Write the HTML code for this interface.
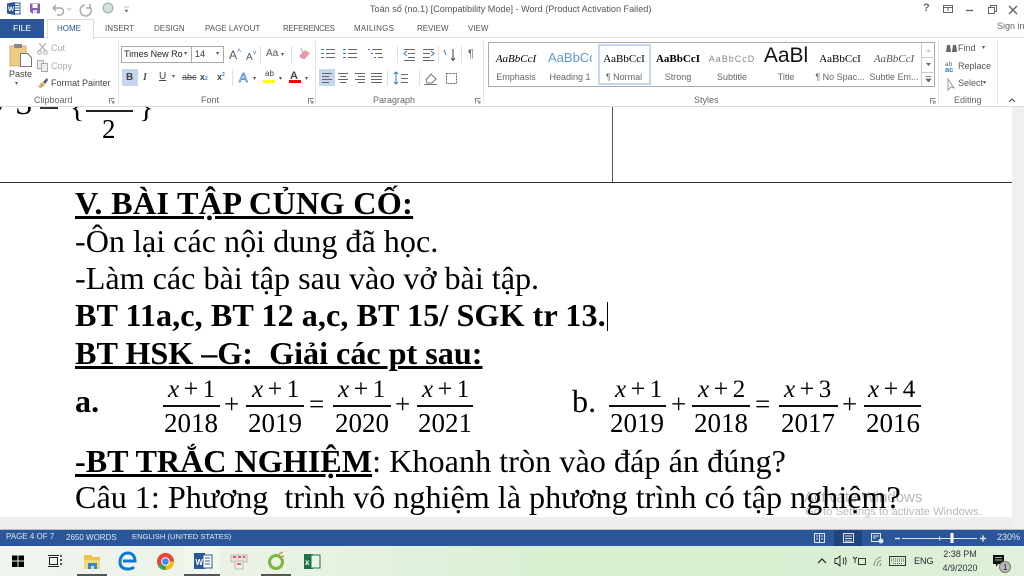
<!DOCTYPE html>
<html><head><meta charset="utf-8"><style>
*{box-sizing:border-box}
html,body{margin:0;padding:0;width:1024px;height:576px;overflow:hidden;background:#fff;position:relative}
.u,.d{position:absolute;white-space:nowrap;line-height:1}
.u{font-family:"Liberation Sans",sans-serif;color:#555;font-size:9px}
.d{font-family:"Liberation Serif",serif;color:#000;font-size:32.15px}
.b{font-weight:bold}
.r{position:absolute}
.c{text-align:center}
svg{position:absolute;overflow:visible}
.tab{font-size:8px;top:24.5px}
.n{font-size:27px;text-align:center;width:60px}
.m{font-size:25px;white-space:pre;word-spacing:0}
.m i{font-style:italic;margin-right:4.500px}
.m b{font-weight:normal;margin-right:4.500px;font-size:26px}
.l{position:absolute;height:1.500px;background:#111;top:405px}
.o{font-size:27px}
.s{position:absolute;width:54px;height:14px;overflow:hidden;text-align:center;white-space:nowrap;font-size:11px;line-height:14px;font-family:"Liberation Serif",serif;color:#000}
.t{position:absolute;width:54px;text-align:center;font:9px/1 "Liberation Sans",sans-serif;color:#666;white-space:nowrap}
</style></head><body>
<!-- document -->
<div class="r" style="left:0;top:107px;width:1012px;height:423px;background:#fff"></div>
<div class="r" style="left:1012px;top:107px;width:12px;height:423px;background:#f0f0f0"></div>
<div class="r" style="left:0;top:517px;width:1012px;height:13px;background:#eeeeee"></div>
<div class="r" style="left:0;top:182px;width:1012px;height:1px;background:#333"></div>
<div class="r" style="left:612px;top:107px;width:1px;height:75px;background:#555"></div>

<div class="u" style="left:804px;top:490px;font-size:15px;color:#b8b8b8">Activate Windows</div>
<div class="u" style="left:805px;top:507px;font-size:11.2px;color:#b8b8b8">Go to Settings to activate Windows.</div>

<div class="d" style="left:0;top:86px;font-size:30px;font-style:italic">/</div>
<div class="d" style="left:15px;top:87px;font-size:32px">S</div>
<div class="r" style="left:40px;top:107px;width:18px;height:2px;background:#333"></div>
<div class="d" style="left:70px;top:93px;font-size:30px">{</div>
<div class="r" style="left:86px;top:110px;width:47px;height:2px;background:#222"></div>
<div class="d" style="left:102px;top:116px;font-size:27px">2</div>
<div class="d" style="left:139px;top:93px;font-size:30px">}</div>

<div class="d b" style="left:75px;top:187px;letter-spacing:.33px;text-decoration:underline;text-decoration-thickness:3px">V. BÀI TẬP CỦNG CỐ:</div>
<div class="d" style="left:75px;top:225px">-Ôn lại các nội dung đã học.</div>
<div class="d" style="left:75px;top:262px">-Làm các bài tập sau vào vở bài tập.</div>
<div class="d b" style="left:75px;top:299px;letter-spacing:.07px">BT 11a,c, BT 12 a,c, BT 15/ SGK tr 13.</div>
<div class="r" style="left:607px;top:302px;width:1px;height:29px;background:#000"></div>
<div class="d b" style="left:75px;top:337px;text-decoration:underline;text-decoration-thickness:3px;white-space:pre">BT HSK –G:  Giải các pt sau:</div>

<div class="d b" style="left:75px;top:385px">a.</div>
<div class="d" style="left:572px;top:385px">b.</div>

<!-- fractions -->
<div class="d m" style="left:168px;top:376px"><i>x</i><b>+</b>1</div><div class="l" style="left:163px;width:57px"></div><div class="d n" style="left:161px;top:410px">2018</div>
<div class="d o" style="left:224px;top:391px">+</div>
<div class="d m" style="left:252px;top:376px"><i>x</i><b>+</b>1</div><div class="l" style="left:246px;width:58px"></div><div class="d n" style="left:245px;top:410px">2019</div>
<div class="d o" style="left:309px;top:391px">=</div>
<div class="d m" style="left:338px;top:376px"><i>x</i><b>+</b>1</div><div class="l" style="left:333px;width:58px"></div><div class="d n" style="left:332px;top:410px">2020</div>
<div class="d o" style="left:395px;top:391px">+</div>
<div class="d m" style="left:422px;top:376px"><i>x</i><b>+</b>1</div><div class="l" style="left:417px;width:56px"></div><div class="d n" style="left:415px;top:410px">2021</div>

<div class="d m" style="left:615px;top:376px"><i>x</i><b>+</b>1</div><div class="l" style="left:609px;width:57px"></div><div class="d n" style="left:607px;top:410px">2019</div>
<div class="d o" style="left:671px;top:391px">+</div>
<div class="d m" style="left:698px;top:376px"><i>x</i><b>+</b>2</div><div class="l" style="left:692px;width:58px"></div><div class="d n" style="left:691px;top:410px">2018</div>
<div class="d o" style="left:755px;top:391px">=</div>
<div class="d m" style="left:784px;top:376px"><i>x</i><b>+</b>3</div><div class="l" style="left:779px;width:59px"></div><div class="d n" style="left:778px;top:410px">2017</div>
<div class="d o" style="left:842px;top:391px">+</div>
<div class="d m" style="left:868px;top:376px"><i>x</i><b>+</b>4</div><div class="l" style="left:864px;width:57px"></div><div class="d n" style="left:863px;top:410px">2016</div>

<div class="d" style="left:75px;top:445px"><span class="b" style="text-decoration:underline;text-decoration-thickness:3px">-BT TRẮC NGHIỆM</span><span style="letter-spacing:.05px">: Khoanh tròn vào đáp án đúng?</span></div>
<div class="d" style="left:75px;top:481px;height:36px;overflow:hidden;white-space:pre;line-height:32px">Câu 1: Phương  trình vô nghiệm là phương trình có tập nghiệm?</div>

<!-- title bar + ribbon -->
<div class="r" style="left:0;top:0;width:1024px;height:107px;background:#fff;border-bottom:1px solid #dcdcdc"></div>
<div class="r" style="left:0;top:37px;width:1024px;height:1px;background:#e2e2e2"></div>
<svg style="left:0;top:0" width="130" height="18">
<rect x="11" y="3" width="9" height="11" fill="#fff" stroke="#2b579a"/><path d="M14 5.500h5M14 8h5M14 10.500h5" stroke="#2b579a"/><path d="M7 3.500l8-1.500v13l-8-1.500z" fill="#2b579a"/><text x="8" y="11" font-family="Liberation Sans" font-size="6.500" font-weight="bold" fill="#fff">W</text>
<path d="M30 3.500h10v10H32l-2-2z" fill="#8a5fb5"/><rect x="32.500" y="4" width="5" height="4" fill="#fff"/><rect x="33" y="10" width="4" height="3.500" fill="#ddd"/>
<path d="M53 8h7a3.500 3.500 0 0 1 0 7h-3M53 8l3-3M53 8l3 3" fill="none" stroke="#aaa" stroke-width="1.500"/>
<path d="M67 8l2 2 2-2" fill="none" stroke="#bbb"/>
<path d="M85 5a5.500 5.500 0 1 0 5 2M90 4v4h-4" fill="none" stroke="#aaa" stroke-width="1.500"/>
<circle cx="108" cy="8" r="5" fill="#cfe3d8" stroke="#9ab"/>
<path d="M124 7h5M125 10h3l-1.500 2z" fill="#777" stroke="#777" stroke-width=".6"/>
</svg>
<div class="u" style="left:370px;top:5px;font-size:9.100px;color:#555">Toán số (no.1) [Compatibility Mode] - Word (Product Activation Failed)</div>
<div class="u b" style="left:923px;top:3px;font-size:11px;color:#666">?</div>
<svg style="left:940px;top:4px" width="84" height="12" fill="none" stroke="#666">
<rect x="3.500" y="1.500" width="9" height="7"/><path d="M3 3.500h10M8 4v3"/>
<path d="M26 6.500h7" stroke-width="1.400"/>
<rect x="48.500" y="3.500" width="6" height="6"/><path d="M50.500 3V1.500h6v6H55"/>
<path d="M69 2l8 8M77 2l-8 8" stroke-width="1.500"/></svg>
<div class="u" style="left:997px;top:22px;font-size:9px;color:#666">Sign in</div>

<div class="r" style="left:0;top:19px;width:44px;height:19px;background:#2b579a"></div>
<div class="u c" style="left:0;top:24px;width:44px;color:#fff;font-size:8.500px">FILE</div>
<div class="r" style="left:47px;top:19px;width:47px;height:20px;background:#fff;border:1px solid #dcdcdc;border-bottom:0"></div>
<div class="u tab" style="left:57px;color:#2b579a">HOME</div>
<div class="u tab" style="left:105px">INSERT</div>
<div class="u tab" style="left:154px">DESIGN</div>
<div class="u tab" style="left:205px">PAGE LAYOUT</div>
<div class="u tab" style="left:283px;letter-spacing:-.3px">REFERENCES</div>
<div class="u tab" style="left:354px;letter-spacing:.25px">MAILINGS</div>
<div class="u tab" style="left:417px">REVIEW</div>
<div class="u tab" style="left:468px">VIEW</div>

<!-- clipboard -->
<svg style="left:9px;top:43px" width="24" height="26"><rect x="1" y="3" width="16" height="20" fill="#eecb85" stroke="#ccb27a"/><rect x="5" y="1" width="8" height="4" fill="#888"/><path d="M11.500 10.500h7l4 4v9h-11z" fill="#fff" stroke="#777"/></svg>
<div class="u" style="left:9px;top:70px;color:#444">Paste</div>
<div class="u" style="left:15px;top:81px;font-size:6px">▾</div>
<svg style="left:37px;top:42px" width="12" height="13" fill="none" stroke="#aaa"><path d="M2 1l7 8M9 1L2 9"/><circle cx="2.500" cy="10.500" r="1.800"/><circle cx="8.500" cy="10.500" r="1.800"/></svg>
<div class="u" style="left:51px;top:44px;color:#aaa">Cut</div>
<svg style="left:37px;top:60px" width="12" height="12" fill="#eee" stroke="#aaa"><rect x=".5" y=".5" width="6" height="8"/><rect x="4.500" y="3.500" width="6" height="8"/></svg>
<div class="u" style="left:51px;top:62px;color:#aaa">Copy</div>
<svg style="left:37px;top:77px" width="12" height="12"><path d="M1 10l4-5 3 3-4 3z" fill="#d9a94f"/><path d="M6 5l4-4 1 2-3 4z" fill="#555"/></svg>
<div class="u" style="left:51px;top:79px;color:#444">Format Painter</div>
<div class="u" style="left:34px;top:96px;color:#666">Clipboard</div>
<div class="r" style="left:118px;top:41px;width:1px;height:64px;background:#e4e4e4"></div>

<!-- font -->
<div class="r" style="left:121px;top:46px;width:71px;height:17px;border:1px solid #aaa;background:#fff"></div>
<div class="r" style="left:192px;top:46px;width:32px;height:17px;border:1px solid #aaa;border-left:0;background:#fff"></div>
<div class="u" style="left:124px;top:50px;color:#222">Times New Ro</div>
<div class="u" style="left:195px;top:50px;color:#333">14</div>
<div class="u" style="left:184px;top:51px;font-size:6px">▾</div>
<div class="u" style="left:216px;top:51px;font-size:6px">▾</div>
<div class="u" style="left:229px;top:48px;font-size:12px;color:#555">A<span style="font-size:7px;vertical-align:6px;color:#2b7cd3">˄</span></div>
<div class="u" style="left:246px;top:50px;font-size:10px;color:#555">A<span style="font-size:7px;vertical-align:5px;color:#2b7cd3">˅</span></div>
<div class="r" style="left:260px;top:46px;width:1px;height:17px;background:#e0e0e0"></div>
<div class="u" style="left:266px;top:49px;font-size:10px;color:#555">Aa</div>
<div class="u" style="left:281px;top:52px;font-size:6px">▾</div>
<div class="r" style="left:291px;top:46px;width:1px;height:17px;background:#e0e0e0"></div>
<svg style="left:298px;top:47px" width="14" height="14"><path d="M1 9l6-6 5 3-5 6H4z" fill="#ec9aa0"/><path d="M3 1l3 7" stroke="#aaa"/></svg>

<div class="r" style="left:122px;top:69px;width:16px;height:17px;background:#c5d7ef"></div>
<div class="u" style="left:126px;top:73px;font-weight:bold;color:#444;font-size:10px">B</div>
<div class="u" style="left:143px;top:73px;font-family:'Liberation Serif';font-style:italic;font-weight:bold;font-size:10px">I</div>
<div class="u" style="left:159px;top:72px;text-decoration:underline;font-size:10px;color:#444">U</div>
<div class="u" style="left:172px;top:74px;font-size:6px">▾</div>
<div class="u" style="left:182px;top:73px;text-decoration:line-through;font-size:9px">abc</div>
<div class="u" style="left:200px;top:73px;font-weight:bold;color:#444;font-size:9px">x<span style="font-size:5px;color:#2b7cd3">2</span></div>
<div class="u" style="left:217px;top:73px;font-weight:bold;color:#444;font-size:9px">x<span style="font-size:5px;vertical-align:4px;color:#2b7cd3">2</span></div>
<div class="r" style="left:232px;top:69px;width:1px;height:17px;background:#e0e0e0"></div>
<div class="u" style="left:239px;top:71px;font-size:13px;color:#fff;-webkit-text-stroke:.8px #4a8bcf">A</div>
<div class="u" style="left:253px;top:76px;font-size:6px">▾</div>
<div class="u" style="left:265px;top:70px;font-size:8px;color:#444">ab</div>
<div class="r" style="left:263px;top:80px;width:12px;height:3px;background:#ff0"></div>
<div class="u" style="left:279px;top:76px;font-size:6px">▾</div>
<div class="u b" style="left:290px;top:71px;font-size:11px;color:#444">A</div>
<div class="r" style="left:289px;top:80px;width:12px;height:3px;background:#f00"></div>
<div class="u" style="left:305px;top:76px;font-size:6px">▾</div>
<div class="u" style="left:201px;top:96px;color:#666">Font</div>
<div class="r" style="left:315px;top:41px;width:1px;height:64px;background:#e4e4e4"></div>

<!-- paragraph -->
<svg style="left:320px;top:45px" width="170" height="42" fill="none" stroke="#666">
<path d="M6 4.500h9M6 8.500h9M6 12.500h9" /><path d="M1 4.500h3M1 8.500h3M1 12.500h3" stroke="#3a7bc8"/>
<path d="M28 4.500h9M28 8.500h9M28 12.500h9"/><path d="M23 4.500h3M23 8.500h3M23 12.500h3" stroke="#3a7bc8"/>
<path d="M52 4.500h10M55 8.500h7M58 12.500h5"/><path d="M48 4.500h2M51 8.500h2M54 12.500h2" stroke="#3a7bc8"/>
<path d="M84 4.500h11M88 8.500h7M88 12.500h7M84 15.500h11"/><path d="M87 6l-3 2.500 3 2.500" stroke="#3a7bc8"/>
<path d="M103 4.500h11M103 8.500h7M103 12.500h7M103 15.500h11"/><path d="M111 6l3 2.500-3 2.500" stroke="#3a7bc8"/>
<path d="M133 4v11M131 13l2 2.500 2-2.500" stroke="#444"/>
<path d="M124 5l2 5" stroke="#3a7bc8"/>
</svg>
<div class="r" style="left:319px;top:69px;width:16px;height:17px;background:#c5d7ef"></div>
<svg style="left:319px;top:69px" width="65" height="18" fill="none" stroke="#666"><path d="M3 4.500h10M3 7.500h7M3 10.500h10M3 13.500h7"/><path d="M19 4.500h10M21 7.500h6M19 10.500h10M21 13.500h6"/><path d="M36 4.500h10M39 7.500h7M36 10.500h10M39 13.500h7"/><path d="M52 4.500h11M52 7.500h11M52 10.500h11M52 13.500h11"/></svg>
<div class="u" style="left:468px;top:49px;font-size:11px;color:#666">¶</div>
<div class="r" style="left:397px;top:46px;width:1px;height:17px;background:#e0e0e0"></div>
<div class="r" style="left:438px;top:46px;width:1px;height:17px;background:#e0e0e0"></div>
<div class="r" style="left:461px;top:46px;width:1px;height:17px;background:#e0e0e0"></div>
<div class="r" style="left:387px;top:69px;width:1px;height:17px;background:#e0e0e0"></div>
<div class="r" style="left:419px;top:69px;width:1px;height:17px;background:#e0e0e0"></div>
<svg style="left:393px;top:70px" width="80" height="16" fill="none" stroke="#666"><path d="M3 2v12M1 4l2-2 2 2M1 12l2 2 2-2" stroke="#3a7bc8"/><path d="M8 4.500h7M8 8.500h7M8 12.500h7"/><path d="M33 10l5-6 5 5-4 4h-5zM31 14.500h13" stroke="#777"/><rect x="53.500" y="3.500" width="10" height="10" stroke-dasharray="2 1"/></svg>
<div class="u" style="left:373px;top:96px;color:#666">Paragraph</div>
<div class="r" style="left:483px;top:41px;width:1px;height:64px;background:#e4e4e4"></div>

<!-- styles -->
<div class="r" style="left:488px;top:42px;width:447px;height:45px;border:1px solid #aaa;background:#fff"></div>
<div class="r" style="left:598px;top:44px;width:53px;height:41px;border:2px solid #c5d7ef"></div>
<div class="s" style="left:489px;top:52px;font-style:italic">AaBbCcI</div><div class="t" style="left:489px;top:73px">Emphasis</div>
<div class="s" style="left:543px;top:51px;width:49px;font:13px/14px 'Liberation Sans';color:#5b9bd5;text-align:left;padding-left:5px">AaBbCc</div><div class="t" style="left:543px;top:73px">Heading 1</div>
<div class="s" style="left:597px;top:52px">AaBbCcI</div><div class="t" style="left:597px;top:73px">¶ Normal</div>
<div class="s" style="left:651px;top:52px;font-weight:bold">AaBbCcI</div><div class="t" style="left:651px;top:73px">Strong</div>
<div class="s" style="left:705px;top:52px;font:9px/14px 'Liberation Sans';color:#888;letter-spacing:1px">AaBbCcD</div><div class="t" style="left:705px;top:73px">Subtitle</div>
<div class="s" style="left:759px;top:44px;height:24px;font:21px/24px 'Liberation Sans';color:#111">AaBl</div><div class="t" style="left:759px;top:73px">Title</div>
<div class="s" style="left:813px;top:52px">AaBbCcI</div><div class="t" style="left:813px;top:73px">¶ No Spac...</div>
<div class="s" style="left:867px;top:52px;font-style:italic;color:#555">AaBbCcI</div><div class="t" style="left:867px;top:73px">Subtle Em...</div>
<div class="r" style="left:921px;top:43px;width:1px;height:43px;background:#ccc"></div>
<svg style="left:922px;top:43px" width="13" height="44" fill="none"><path d="M0 14.500h13M0 29.500h13" stroke="#ccc"/><path d="M4 9l2.500-3 2.500 3z" fill="#ccc"/><path d="M4 20l2.500 3 2.500-3z" fill="#666"/><path d="M3.500 33.500h6M4 36l2.500 3 2.500-3z" stroke="#666" fill="#666" stroke-width=".7"/></svg>
<div class="u" style="left:694px;top:96px;color:#666">Styles</div>
<div class="r" style="left:938px;top:41px;width:1px;height:64px;background:#e4e4e4"></div>

<!-- editing -->
<svg style="left:945px;top:42px" width="14" height="50"><path d="M1 10l1-7h3l1 7zM7 10l1-7h3l1 7z" fill="#666"/><text x="0" y="24" font-family="Liberation Sans" font-size="6.500" fill="#666">ab</text><text x="0" y="30" font-family="Liberation Sans" font-size="7.500" font-weight="bold" fill="#2b7cd3">ac</text><path d="M3 37l0 11 3-3 3 1z" fill="#fff" stroke="#888" stroke-width=".8"/></svg>
<div class="u" style="left:958px;top:44px">Find</div><div class="u" style="left:982px;top:45px;font-size:6px">▾</div>
<div class="u" style="left:958px;top:62px">Replace</div>
<div class="u" style="left:958px;top:79px">Select</div><div class="u" style="left:983px;top:80px;font-size:6px">▾</div>
<div class="u" style="left:954px;top:96px;color:#666">Editing</div>
<div class="r" style="left:997px;top:41px;width:1px;height:64px;background:#e4e4e4"></div>
<svg style="left:1008px;top:97px" width="10" height="6" fill="none" stroke="#555" stroke-width="1.200"><path d="M1 5l3-3 3 3"/></svg>
<svg style="left:109px;top:98px" width="6" height="6" fill="none" stroke="#888"><path d="M.5 5.500v-5h5M2 2l3 3M5 3v2H3"/></svg>
<svg style="left:308px;top:98px" width="6" height="6" fill="none" stroke="#888"><path d="M.5 5.500v-5h5M2 2l3 3M5 3v2H3"/></svg>
<svg style="left:475px;top:98px" width="6" height="6" fill="none" stroke="#888"><path d="M.5 5.500v-5h5M2 2l3 3M5 3v2H3"/></svg>
<svg style="left:930px;top:98px" width="6" height="6" fill="none" stroke="#888"><path d="M.5 5.500v-5h5M2 2l3 3M5 3v2H3"/></svg>

<!-- status bar -->
<div class="r" style="left:0;top:529px;width:1024px;height:1px;background:#b5bfce"></div>
<div class="r" style="left:0;top:530px;width:1024px;height:16px;background:#2b579a"></div>
<div class="u" style="left:6px;top:533px;color:#dfe6f2;font-size:8px">PAGE 4 OF 7</div>
<div class="u" style="left:66px;top:534px;color:#dfe6f2;font-size:8px">2650 WORDS</div>
<div class="u" style="left:132px;top:533px;color:#dfe6f2;font-size:7.600px">ENGLISH (UNITED STATES)</div>
<div class="r" style="left:834px;top:530px;width:28px;height:16px;background:#1f4580"></div>
<svg style="left:812px;top:531px" width="180" height="14" fill="none" stroke="#dfe6f2">
<rect x="2.500" y="2.500" width="10" height="9"/><path d="M7.500 2.500v9M4 5h2M9 5h2M4 8h2M9 8h2"/>
<rect x="31.500" y="2.500" width="10" height="9"/><path d="M33 5h7M33 7.500h7M33 10h7"/>
<rect x="59.500" y="2.500" width="9" height="8"/><path d="M61 5h6M61 7h3"/><circle cx="69" cy="10" r="2" fill="#dfe6f2"/>
<path d="M83 7.500h5" stroke-width="1.500"/><path d="M90 7.500h75M127.500 5.500v4" />
<rect x="138.500" y="2" width="3" height="10" fill="#fff" stroke="none"/>
<path d="M168 7.500h6M171 4.500v6" stroke-width="1.500"/>
</svg>
<div class="u" style="left:997px;top:533px;color:#dfe6f2;font-size:9px">230%</div>

<!-- taskbar -->
<div class="r" style="left:0;top:546px;width:1024px;height:30px;background:linear-gradient(90deg,#f0f4ee 0%,#e8f2e4 30%,#d8efd0 55%,#d9efd3 80%,#e0f0da 100%)"></div>
<div class="r" style="left:184px;top:546px;width:36px;height:30px;background:#f0f8ee"></div>
<div class="r" style="left:77px;top:574px;width:30px;height:2px;background:#555"></div>
<div class="r" style="left:184px;top:574px;width:36px;height:2px;background:#555"></div>
<div class="r" style="left:261px;top:574px;width:30px;height:2px;background:#555"></div>
<svg style="left:0;top:546px" width="340" height="30">
<path d="M12 9.500h5.500v5H12zM18.500 9.500H24v5h-5.500zM12 15.500h5.500v5.500H12zM18.500 15.500H24v5.500h-5.500z" fill="#000"/>
<g fill="none" stroke="#222"><rect x="49.500" y="11.500" width="8" height="7"/><path d="M48 9.500h11M48 20.500h11"/><path d="M60 10h2M60 14h2M60 18h2" stroke-width="1.500"/></g>
<path d="M84 9h7l2 2h7v12H84z" fill="#f0c24d"/><path d="M84 14h16v9H84z" fill="#f7d774"/><rect x="88" y="17" width="9" height="6" fill="#2e8bd6"/><rect x="91" y="20" width="3" height="3" fill="#f7d774"/>
<path d="M123 15h12c0-5-3-8-7-8-5 0-8 4-8 9s3 7 8 7c3 0 5-1 6-2" fill="none" stroke="#0f78d4" stroke-width="3"/>
<circle cx="165.500" cy="15.500" r="8.500" fill="#e8453c"/><path d="M165.500 15.500L158 20a8.500 8.500 0 0 0 8 4z" fill="#34a853"/><path d="M165.500 15.500h8.500a8.500 8.500 0 0 1-8 8.500z" fill="#fbbc05"/><circle cx="165.500" cy="15.500" r="3.800" fill="#4285f4" stroke="#fff"/>
<rect x="194" y="7" width="11" height="16" fill="#2b579a"/><rect x="203" y="9" width="9" height="13" fill="#fff" stroke="#2b579a"/><path d="M205 12h5M205 15h5M205 18h5" stroke="#2b579a"/><text x="195.500" y="19" font-family="Liberation Sans" font-size="8" font-weight="bold" fill="#fff">W</text>
<rect x="231" y="9" width="16" height="7" fill="#e8e0dc" stroke="#bbb"/><rect x="235" y="15" width="8" height="8" fill="#eee" stroke="#bbb"/><path d="M233 11h3M238 11h3M243 11h2M237 18h4" stroke="#d33" stroke-width="1.500"/>
<circle cx="276" cy="16" r="6.500" fill="none" stroke="#7cb53f" stroke-width="3"/><path d="M279 8l4-2M281 11l3-1" stroke="#d85" stroke-width="1.500"/>
<rect x="304" y="8" width="9" height="15" fill="#1d7245"/><rect x="311" y="9" width="9" height="13" fill="#e8f3ea" stroke="#1d7245"/><text x="305" y="19" font-family="Liberation Sans" font-size="8" font-weight="bold" fill="#fff">x</text>
</svg>
<svg style="left:815px;top:552px" width="140" height="18" fill="none" stroke="#222">
<path d="M3 11l4-4 4 4" stroke-width="1.200"/>
<path d="M20 6.500h2l3-2.500v10l-3-2.500h-2zM28 6c1 2 1 4 0 6M30 5c1.500 2.500 1.500 5.500 0 8" stroke-width=".9"/>
<path d="M38 5l2 2 2-2M40 7v4" stroke-width=".9"/><rect x="43.500" y="6.500" width="7" height="6" stroke-width=".9"/>
<path d="M59 14c0-5 3-8 7-9M62 14c0-3 2-5 4-6M65 14c0-1 .5-2 1-2.500" stroke="#777" stroke-width=".9"/>
<rect x="74.500" y="4.500" width="16" height="9" stroke-width=".9"/><path d="M76 7h13M76 9h13M78 11.500h9" stroke-width=".7" stroke-dasharray="1 1"/>
</svg>
<div class="u" style="left:914px;top:557px;color:#222;font-size:9px">ENG</div>
<div class="u c" style="left:938px;top:550px;width:44px;color:#333;font-size:9px">2:38 PM</div>
<div class="u c" style="left:938px;top:564px;width:44px;color:#333;font-size:9px">4/9/2020</div>
<svg style="left:992px;top:552px" width="24" height="22"><path d="M1 3h11v9H6l-2 3v-3H1z" fill="#111"/><path d="M3 5.500h7M3 8h7" stroke="#ddd" stroke-width=".7"/><circle cx="13" cy="15" r="5.500" fill="#bbb" stroke="#777"/><text x="11" y="18" font-family="Liberation Sans" font-size="8" fill="#222">1</text></svg>
</body></html>
